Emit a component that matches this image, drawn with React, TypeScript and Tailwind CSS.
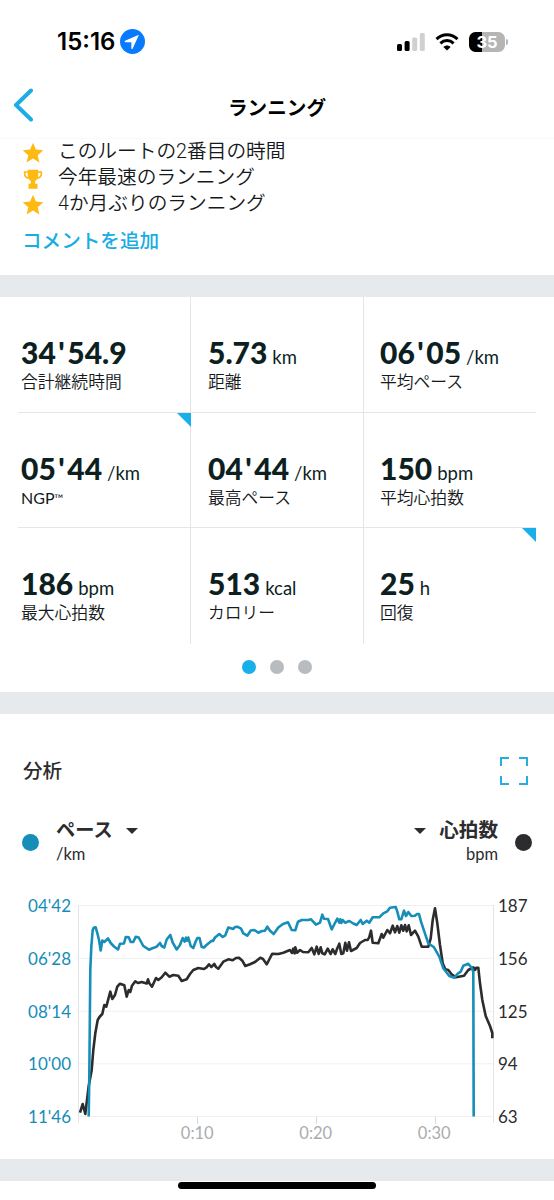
import React from "react";
import clsx from "clsx";

interface Stat {
    value: string;
    unit?: string;
    label: string;
    tm?: boolean;
    marked?: boolean;
}

const stats: Stat[] = [
    { value: "34'54.9", label: "合計継続時間" },
    { value: "5.73", unit: "km", label: "距離" },
    { value: "06'05", unit: "/km", label: "平均ペース" },
    { value: "05'44", unit: "/km", label: "NGP", tm: true, marked: true },
    { value: "04'44", unit: "/km", label: "最高ペース" },
    { value: "150", unit: "bpm", label: "平均心拍数" },
    { value: "186", unit: "bpm", label: "最大心拍数" },
    { value: "513", unit: "kcal", label: "カロリー" },
    { value: "25", unit: "h", label: "回復", marked: true },
];

const achievements = [
    { icon: "star", text: "このルートの2番目の時間" },
    { icon: "trophy", text: "今年最速のランニング" },
    { icon: "star", text: "4か月ぶりのランニング" },
];

const paceTicks = ["04'42", "06'28", "08'14", "10'00", "11'46"];
const heartTicks = ["187", "156", "125", "94", "63"];
const timeTicks = ["0:10", "0:20", "0:30"];

const pacePoints =
    "88.7,1116.5 89.3,1076 90.3,970 91.3,947 92.7,930 93.7,927.7 95.7,927.3 97.3,933 99,940 100.7,950.5 102.3,940.5 104.3,942 108,938.5 110.7,943 114,946.5 118,949.5 120,943.7 124,943.5 125.7,937 128.7,937.3 130.7,942 133.3,942 135.7,936.7 138.7,937.5 143.3,946 149,949.7 153,948 156.7,946.7 160,943 161.7,946 164.3,947.5 166.7,939.5 170.3,935 172.7,942.7 176.7,949.5 180,945 182.7,938 184.7,941.7 186,937.7 187,940.7 188.3,937.5 190.7,946 193.3,948 195.5,942 197.3,938 199.5,938 201.7,947 204,947.5 206.5,945 208.3,943.5 211.7,940.7 213,941 215,937.5 219.3,934 222.7,937 225.3,935.3 228.3,927.5 233.3,929 235,927 237.3,926.7 241,928.7 243.3,933.3 247.3,935.7 250.7,930.5 254.3,930 258.3,932.7 262,931 265,930.7 267.3,926.7 270,930.7 273.7,934 278.3,927.5 283,924 288,922.3 291.7,930 295.3,930.3 298,921.7 301.7,920 308.3,920 311,919.3 316,924.7 320,922.7 322.3,914.7 324,918.7 328,919 331.7,929.3 335,923 337.3,918.7 339.3,922.7 340.3,919.3 341.3,923 342.7,920 345,922.7 349.3,921 353.3,923.5 356.7,925 360.7,920 362.7,924 366.7,920.7 369.3,922.7 372.7,917.3 379.3,917.3 383.3,913.3 387.3,911.3 390,907.7 395.7,907 397.3,911.7 399.3,919.3 401.3,919.3 404,910.7 406,916 408.3,912 411.3,916 415,915.7 417,914 419,914 421,921.7 424,930.7 428.3,943.3 434,947.3 439.3,956.7 443.3,968.3 449.3,976 454.3,977.7 457.3,974 460.7,971.7 463.3,965.7 468.3,963.7 472,968.3 473.3,972 473.7,1116.5";

const heartPoints =
    "80,1112.7 82.7,1104 85.3,1114 88.7,1086 91.7,1070 93.3,1050 95.3,1033.3 97.7,1020 99.5,1017 102.3,1014 104.3,1005 106.3,1006.7 110.3,991.7 112.3,999 115,995 117.3,986.7 120,983.7 124.3,985.3 126.7,996.7 128.7,990 130.3,992 132,985.7 135.3,981.3 138,983 141.7,982 146.7,983.5 148,979.3 149.3,983.3 152,986.7 156,978 158.3,980 161.7,977.3 165.3,972.7 169.3,976.7 173.3,975 178.3,975.7 181.7,981 186.7,979.3 190,974 193.3,970 198.3,968 204,969 206.5,967.3 209,964.3 211.3,967 214.3,964 216,967 218.3,968.7 223.3,961.7 228.3,959.3 232.7,960.3 236,958 239,957.7 242.3,960.7 245.3,966 250,964.3 255,962 260.3,957.7 263,959 266.7,964.3 269.5,959 272.3,953.7 278.3,954 283.3,952.7 290,950 292,953 293.3,948.7 294.7,953.3 295.3,947.3 297,952.7 300,950 303,952 308.3,952.3 311.7,948 314.3,954.3 316.7,946.7 318.7,954 320.7,947.3 322.3,953.3 324.7,954.3 327.7,948.7 330.7,954 332.7,949.3 335.3,954 337,949 339.3,943.7 341.3,954 343.3,953.3 345.3,942.7 347,950.7 349,942.3 351,951 356.7,948 360,943 365,940 367.7,940 369.3,937 371,930.7 372.7,942.7 378.3,943.3 381.7,934 383.3,937.7 387.3,930 390,933.3 392.7,925.7 395,932.3 397.3,926 399.3,932.7 401.3,925.3 403.3,930.7 405,925 406.7,931.3 408.7,925.3 411,935 415,930.7 418.3,936.7 421.7,946.7 428.3,946.7 430.7,938.3 432.7,920 435,908.3 437.3,923.3 440,945 442.7,963.3 445.3,969.3 448.3,970 452,974.7 456,977.3 464,975.7 468.3,970 473.3,967.3 475,970 476.3,967.7 478.3,967.7 480,983.3 482.3,1000 485.7,1016 490,1026 492.3,1033 492.3,1038.3";

const StarIcon = () => (
    <svg viewBox="0 0 22 22" className="size-[22px]" fill="#fdba12">
        <path d="M11 .8l2.9 6.8 7.4.7-5.6 4.9 1.7 7.3L11 16.6l-6.4 3.9 1.7-7.3L.7 8.3l7.4-.7z" />
    </svg>
);

const TrophyIcon = () => (
    <svg viewBox="0 0 20 20" className="size-5" fill="#fdba12">
        <path
            fillRule="evenodd"
            d="M4.7.8h10.6v1.4h3.9v2.6c0 3-1.9 4.9-5 5.3-.7.9-1.3 1.5-2 1.8v2.9h2.3v5H5.5v-5h2.3v-2.9c-.7-.3-1.3-.9-2-1.8-3.1-.4-5-2.3-5-5.3V2.2h3.9zM4.7 3.8H2.4c-.1 2.4.8 3.8 2.7 4.5-.3-1.3-.4-2.8-.4-4.5zm10.6 0c0 1.7-.1 3.2-.4 4.5 1.9-.7 2.8-2.1 2.7-4.5z"
        />
    </svg>
);

const StatusBar = () => (
    <div className="flex h-[82px] items-center justify-between pl-[57px] pr-[46px] pt-px font-['Inter','Liberation_Sans',sans-serif]">
        <div className="flex items-center gap-1">
            <span className="w-[59px] whitespace-nowrap pt-px text-[24px] font-semibold text-black">
                15:16
            </span>
            <svg viewBox="0 0 24 24" className="size-[25px]">
                <circle cx="12" cy="12" r="12" fill="#087aff" />
                <path
                    d="M17.6 5.7L4.9 11.3c-.7.3-.6 1.3.3 1.3h5.7v5.8c0 .9 1 1 1.3.2l5.8-12.5c.1-.3-.1-.5-.4-.4z"
                    fill="#fff"
                />
            </svg>
        </div>
        <div className="flex items-center">
            <svg viewBox="0 0 28 18" className="h-[18px] w-7">
                <rect x="0" y="11" width="5" height="7" rx="1.5" fill="#000" />
                <rect x="7.6" y="8" width="5" height="10" rx="1.5" fill="#000" />
                <rect x="15.2" y="4.5" width="5" height="13.5" rx="1.5" fill="#d0d0d0" />
                <rect x="22.8" y="0" width="5" height="18" rx="1.5" fill="#d0d0d0" />
            </svg>
            <svg viewBox="0 0 24 18" className="mx-2.5 h-[18px] w-6" fill="none">
                <path d="M1.5 6.2C7.5.4 16.5.4 22.5 6.2" stroke="#000" strokeWidth="3" />
                <path d="M5.4 10.3c3.8-3.6 9.4-3.6 13.2 0" stroke="#000" strokeWidth="3" />
                <path d="M8.4 13.9c2.1-2 5.1-2 7.2 0L12 17.5z" fill="#000" />
            </svg>
            <div className="flex h-5 w-9 items-center justify-center rounded-[6.5px] bg-[linear-gradient(90deg,#000_36%,#b5b5b5_36%)] text-[16.5px] leading-5 font-bold text-white">
                35
            </div>
            <span className="ml-px h-1.5 w-0.5 rounded-r-full bg-[#b5b5b5]" />
        </div>
    </div>
);

const Header = () => (
    <header className="grid h-[57px] grid-cols-[60px_1fr_60px] items-center border-b border-[#fafafa]">
        <svg viewBox="0 0 20 34" className="-mt-2.5 ml-[13px] h-[34px] w-5" fill="none">
            <path
                d="M18 2.5L3 17l15 14.5"
                stroke="#1bade4"
                strokeWidth="4"
                strokeLinecap="round"
                strokeLinejoin="round"
            />
        </svg>
        <h1 className="-mt-[5px] text-center text-[19.6px] font-bold text-black">
            ランニング
        </h1>
    </header>
);

const StatCell: React.FC<{ stat: Stat; index: number }> = ({ stat, index }) => (
    <div
        className={clsx(
            "relative pt-[38px]",
            index % 3 === 0 && "pl-[3px]",
            index % 3 === 1 && "pl-[17px]",
            index % 3 === 2 && "pl-4",
            index % 3 < 2 && "border-r border-[#e3e5e7]",
            index < 6 && "border-b border-[#e3e5e7]"
        )}>
        <div className="flex h-[35px] items-baseline whitespace-nowrap leading-[34px] text-[#0d1f1f]">
            <span className="flex text-[30px] font-black">
                {stat.value.split("'").map((part, i) => (
                    <React.Fragment key={i}>
                        {i > 0 && <span className="mx-[2.5px]">'</span>}
                        {part}
                    </React.Fragment>
                ))}
            </span>
            {stat.unit && <span className="ml-[5px] text-[18.5px]">{stat.unit}</span>}
        </div>
        <div className="text-[16.8px] leading-6 font-[350] text-[#15191b]">
            {stat.tm ? (
                <span className="text-base font-normal">
                    {stat.label}
                    <span className="align-[1px] text-[12px]">™</span>
                </span>
            ) : (
                stat.label
            )}
        </div>
        {stat.marked && (
            <span
                className={clsx(
                    "absolute top-0 size-[14px] bg-[#19afe8] [clip-path:polygon(0_0,100%_0,100%_100%)]",
                    index % 3 < 2 ? "-right-px" : "right-0"
                )}
            />
        )}
    </div>
);

const Chart = () => (
    <div className="flex text-[17px]">
        <div className="w-[78px] pr-[7px] pt-0.5 text-right text-[#158db7]">
            {paceTicks.map((tick) => (
                <div key={tick} className="h-[52.8px] leading-[52.8px]">
                    {tick}
                </div>
            ))}
        </div>
        <div className="w-[416px]">
            <svg viewBox="78 878 416 246" className="block h-[246px] w-full" fill="none">
                {[905.5, 958.3, 1011.2, 1063.8, 1116.5].map((y) => (
                    <path key={y} d={`M78 ${y}H493.5`} stroke="#eef0f2" />
                ))}
                <path d="M78.5 905V1123M493.5 905V1123" stroke="#dfe5ea" />
                <path d="M197.5 1117v7M316.5 1117v7M435.5 1117v7" stroke="#d3dbe0" />
                <polyline
                    points={heartPoints}
                    stroke="#2c2c2e"
                    strokeWidth="2.6"
                    strokeLinejoin="round"
                />
                <polyline
                    points={pacePoints}
                    stroke="#168eb8"
                    strokeWidth="2.6"
                    strokeLinejoin="round"
                />
            </svg>
            <div className="flex pl-[60px] text-center text-[16.5px] leading-[18px] text-[#a9adb0]">
                {timeTicks.map((tick) => (
                    <span key={tick} className="w-[118.5px]">
                        {tick}
                    </span>
                ))}
            </div>
        </div>
        <div className="pl-1 pt-0.5 text-[#2c2c2e]">
            {heartTicks.map((tick) => (
                <div key={tick} className="h-[52.8px] leading-[52.8px]">
                    {tick}
                </div>
            ))}
        </div>
    </div>
);

const Caret = () => (
    <svg viewBox="0 0 12 6" className="mt-0.5 h-1.5 w-3" fill="#2c2c2e">
        <path d="M0 0h12L6 6z" />
    </svg>
);

export default function App() {
    return (
        <div className="flex h-[1200px] w-[554px] flex-col overflow-hidden bg-white font-['Lato','Noto_Sans_CJK_JP',sans-serif]">
            <StatusBar />
            <Header />
            <section className="h-[136px] pl-[22px]">
                {achievements.map((item) => (
                    <div key={item.text} className="flex h-[26px] items-center">
                        <span className="mt-0.5 flex w-[22px] justify-center">
                            {item.icon === "star" ? <StarIcon /> : <TrophyIcon />}
                        </span>
                        <span className="ml-[14px] whitespace-nowrap font-['Roboto','Noto_Sans_CJK_JP',sans-serif] text-[19.7px] leading-[26px] font-[350] text-[#15191b]">
                            {item.text}
                        </span>
                    </div>
                ))}
                <a className="mt-[10px] block text-[19.6px] leading-7 font-medium text-[#19ade3]">
                    コメントを追加
                </a>
            </section>
            <div className="h-[22px] shrink-0 bg-[#e7eaed]" />

            <section className="h-[395px] shrink-0">
                <div className="ml-[18px] grid w-[518px] grid-cols-[173px_173px_172px] grid-rows-[116px_115px_116px]">
                    {stats.map((stat, i) => (
                        <StatCell key={stat.label} stat={stat} index={i} />
                    ))}
                </div>
                <div className="mt-4 flex justify-center gap-[14px]">
                    <span className="size-[14px] rounded-full bg-[#19afe8]" />
                    <span className="size-[14px] rounded-full bg-[#b9bcbf]" />
                    <span className="size-[14px] rounded-full bg-[#b9bcbf]" />
                </div>
            </section>
            <div className="h-[22px] shrink-0 bg-[#e7eaed]" />

            <section className="h-[445px] shrink-0 text-[#2c2c2e]">
                <div className="flex h-[86px] items-center justify-between px-[23px] pt-[28px]">
                    <h2 className="text-[19.6px] font-medium">分析</h2>
                    <svg viewBox="0 0 30 30" className="mr-0.5 size-[30px]" fill="none">
                        <path
                            d="M2 10V2h8M20 2h8v8M28 20v8h-8M10 28H2v-8"
                            stroke="#27ade0"
                            strokeWidth="2"
                        />
                    </svg>
                </div>
                <div className="flex h-[78px] items-start justify-between px-[22px] pt-[17px]">
                    <div className="flex">
                        <span className="mt-[17px] size-[17px] rounded-full bg-[#168eb8]" />
                        <div className="ml-[17px]">
                            <div className="flex items-center gap-[13px] text-[19.2px] leading-[26px] font-bold">
                                ペース
                                <Caret />
                            </div>
                            <div className="text-[16.5px] leading-[22px]">/km</div>
                        </div>
                    </div>
                    <div className="flex">
                        <div className="mr-[17px] text-right">
                            <div className="flex items-center gap-[13px] text-[19.6px] leading-[26px] font-bold">
                                <Caret />
                                心拍数
                            </div>
                            <div className="text-[16.5px] leading-[22px]">bpm</div>
                        </div>
                        <span className="mt-[17px] size-[17px] rounded-full bg-[#2c2c2e]" />
                    </div>
                </div>
                <Chart />
            </section>
            <div className="h-[22px] shrink-0 bg-[#e7eaed]" />
            <div className="flex shrink-0 justify-center pt-px">
                <span className="h-[7px] w-[198px] rounded-full bg-black" />
            </div>
        </div>
    );
}
